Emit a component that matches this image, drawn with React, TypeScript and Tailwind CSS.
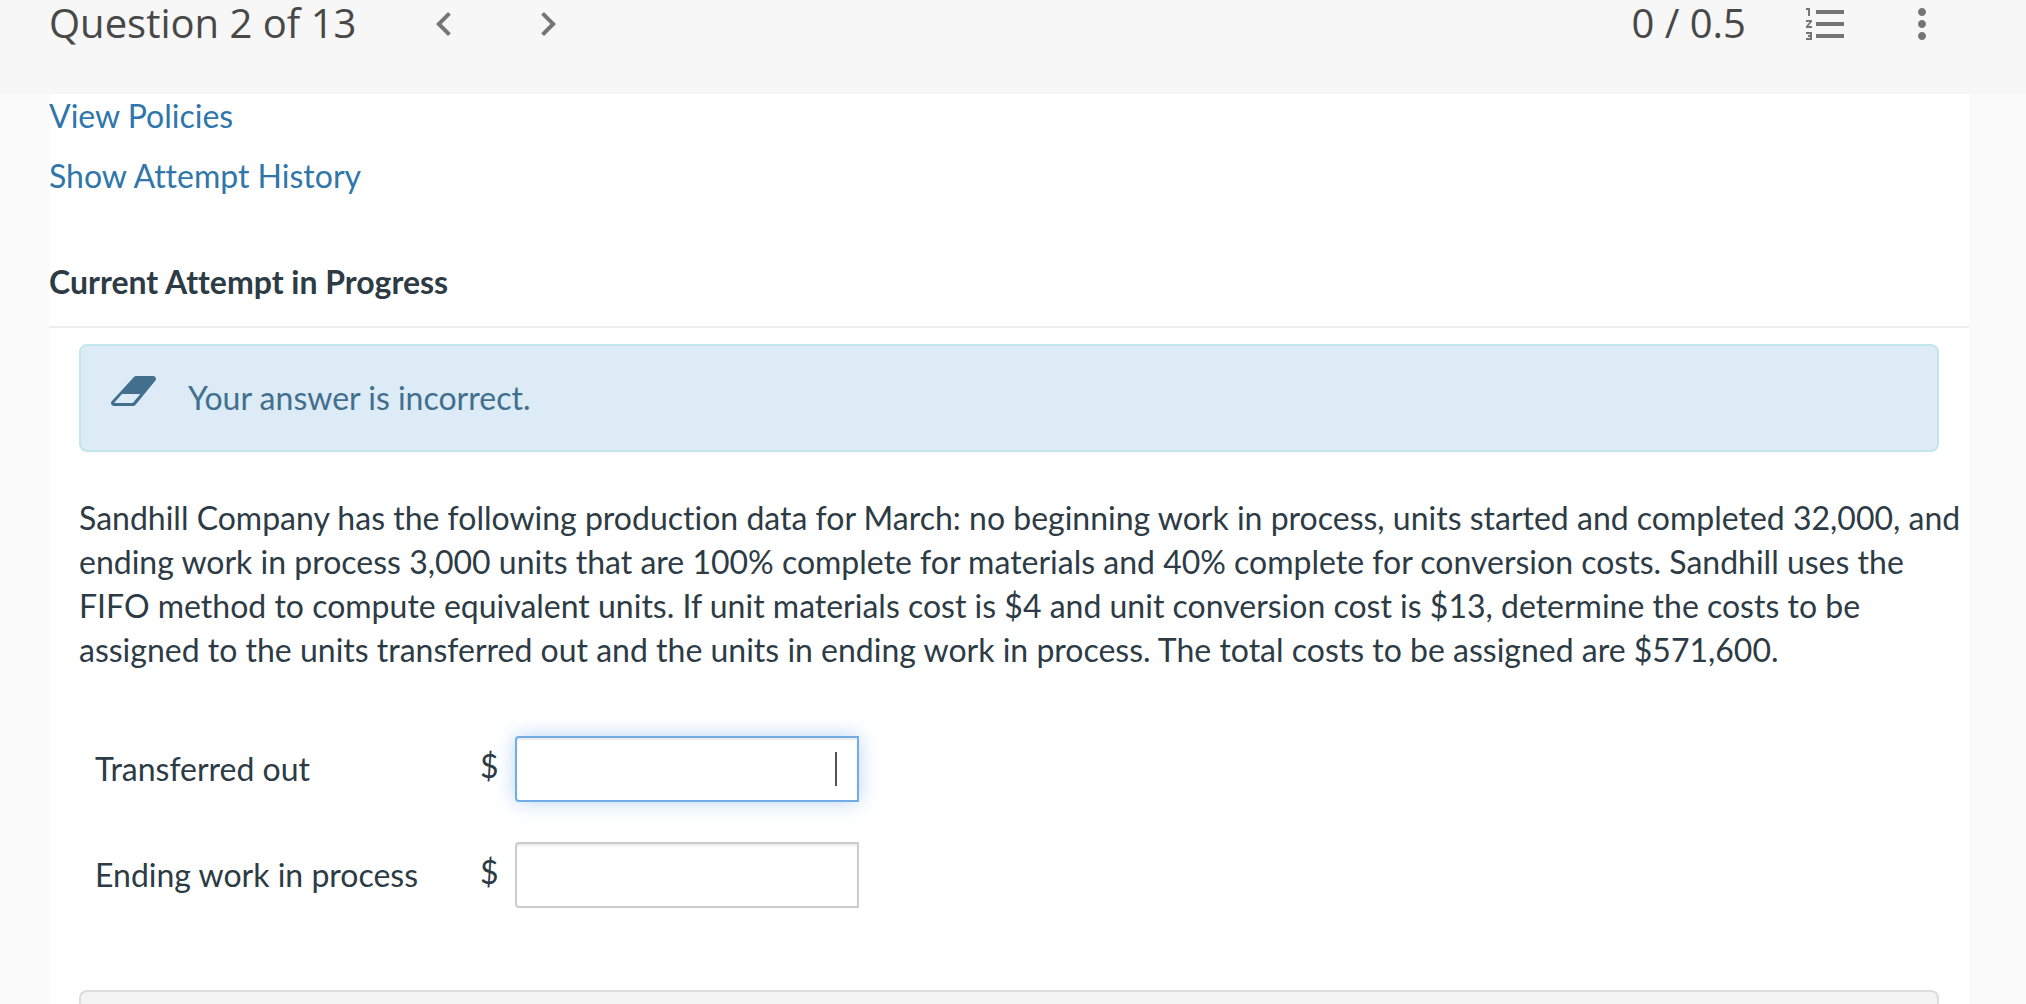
import { MdChevronLeft, MdChevronRight, MdFormatListNumbered, MdMoreVert } from "react-icons/md";

function EraserIcon() {
  return (
    <svg viewBox="0 0 45 30" className="h-[30px] w-[45px] shrink-0" aria-hidden="true">
      <path
        fill="currentColor"
        fillRule="evenodd"
        d="M25.5 0H42c1.200 0 2.200.7 2.700 1.700.5 1.100.3 2.200-.5 3.100L24.600 28.700c-.7.800-1.700 1.300-2.800 1.300H3c-1.200 0-2.200-.7-2.700-1.700-.5-1.100-.3-2.300.4-3.100L22.700 1.300C23.400.5 24.400 0 25.500 0ZM21.800 27l7.500-9H11L3 27Z"
      />
    </svg>
  );
}

type AmountRowProps = { id: string; label: string; active?: boolean };

function AmountRow({ id, label, active }: AmountRowProps) {
  return (
    <div className="flex items-center">
      <label htmlFor={id} className="w-[385px]">
        {label}
      </label>
      <span className="w-[35px] pb-1.5">$</span>
      <div className="relative">
        <input
          id={id}
          type="text"
          className={
            active
              ? "block h-[66px] w-[344px] rounded-l-sm border-2 border-[#74ade6] bg-white px-5 text-right caret-transparent shadow-[inset_0_2px_2px_rgba(0,0,0,0.075),0_0_20px_rgba(82,150,230,0.4)] outline-none"
              : "block h-[66px] w-[344px] rounded-l-sm border-2 border-[#cccccc] bg-white px-5 text-right shadow-[inset_0_2px_2px_rgba(0,0,0,0.075)] outline-none"
          }
        />
        {active && <span className="absolute top-4 right-[22px] h-[34px] w-[2px] bg-[#555555]" aria-hidden="true" />}
      </div>
    </div>
  );
}

export default function App() {
  return (
    <div className="flex min-h-screen flex-col bg-[#fafafa] font-['Lato',sans-serif] text-[32px] leading-[44px] text-[#2d3b45] [font-variant-ligatures:none]">
      <header className="flex h-[94px] items-start justify-between bg-[#f7f7f7] pr-20 pl-[49px] font-['Open_Sans',sans-serif] text-[40px] leading-[46px] text-[#484848]">
        <div className="flex items-start">
          <h1>Question 2 of 13</h1>
          <nav className="ml-16 flex gap-14 text-[#757575]">
            <button type="button" aria-label="Previous question">
              <MdChevronLeft size={48} />
            </button>
            <button type="button" aria-label="Next question">
              <MdChevronRight size={48} />
            </button>
          </nav>
        </div>
        <div className="flex items-start">
          <span>0 / 0.5</span>
          <div className="ml-14 flex gap-12 text-[#757575]">
            <button type="button" aria-label="Question list">
              <MdFormatListNumbered size={48} />
            </button>
            <button type="button" aria-label="More options">
              <MdMoreVert size={48} />
            </button>
          </div>
        </div>
      </header>

      <main className="mr-[57px] ml-[49px] flex grow flex-col bg-white">
        <div className="flex flex-col items-start gap-4 text-[#2f76aa]">
          <a href="#policies">View Policies</a>
          <a href="#history">Show Attempt History</a>
        </div>

        <h2 className="mt-[62px] border-b-2 border-[#eeeeee] pb-[22px] font-bold">Current Attempt in Progress</h2>

        <div className="mt-4 flex grow flex-col px-[30px]">
          <div
            role="alert"
            className="flex items-start rounded-lg border-2 border-[#c3e6ee] bg-[#dcebf6] px-[30px] py-[30px] text-[#426f8e]"
          >
            <EraserIcon />
            <p className="ml-8">Your answer is incorrect.</p>
          </div>

          <p className="mt-11 -mr-7">
            Sandhill Company has the following production data for March: no beginning work in process, units started
            and completed 32,000, and ending work in process 3,000 units that are 100% complete for materials and 40%
            complete for conversion costs. Sandhill uses the FIFO method to compute equivalent units. If unit materials
            cost is $4 and unit conversion cost is $13, determine the costs to be assigned to the units transferred out
            and the units in ending work in process. The total costs to be assigned are $571,600.
          </p>

          <form className="mt-16 flex flex-col gap-10 pl-4">
            <AmountRow id="transferred-out" label="Transferred out" active />
            <AmountRow id="ending-wip" label="Ending work in process" />
          </form>

          <section className="mt-[82px] grow rounded-t-lg border-2 border-b-0 border-[#dddddd] bg-[#f4f4f4] pb-3" />
        </div>
      </main>
    </div>
  );
}
